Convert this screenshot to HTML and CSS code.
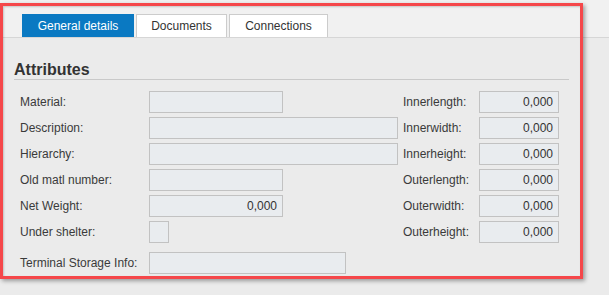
FILE: index.html
```html
<!DOCTYPE html>
<html lang="en">
<head>
  <meta charset="UTF-8">
  <meta name="viewport" content="width=device-width, initial-scale=1.0">
  <title>Material - General details</title>
  <link rel="stylesheet" href="styles.css">
</head>
<body>
  <div class="screen">
    <div class="tabbar">
      <button class="tab tab-general active">General details</button>
      <button class="tab tab-docs">Documents</button>
      <button class="tab tab-conn">Connections</button>
    </div>

    <section class="panel">
      <h2 class="section-title">Attributes</h2>

      <div class="form-grid">
        <label class="lbl">Material:</label>
        <div class="field w-short"></div>
        <label class="lbl">Innerlength:</label>
        <div class="field num">0,000</div>

        <label class="lbl">Description:</label>
        <div class="field w-long"></div>
        <label class="lbl">Innerwidth:</label>
        <div class="field num">0,000</div>

        <label class="lbl">Hierarchy:</label>
        <div class="field w-long"></div>
        <label class="lbl">Innerheight:</label>
        <div class="field num">0,000</div>

        <label class="lbl">Old matl number:</label>
        <div class="field w-short"></div>
        <label class="lbl">Outerlength:</label>
        <div class="field num">0,000</div>

        <label class="lbl">Net Weight:</label>
        <div class="field w-short num">0,000</div>
        <label class="lbl">Outerwidth:</label>
        <div class="field num">0,000</div>

        <label class="lbl">Under shelter:</label>
        <div class="field check"></div>
        <label class="lbl">Outerheight:</label>
        <div class="field num">0,000</div>
      </div>

      <div class="form-row">
        <label class="lbl">Terminal Storage Info:</label>
        <div class="field w-mid"></div>
      </div>
    </section>

    <div class="highlight"></div>
  </div>
</body>
</html>
```

FILE: styles.css
```css
body { margin: 0; background: #ebebeb; font-family: "Liberation Sans", Arial, sans-serif; color: #333; }
.screen { position: relative; width: 609px; height: 295px; overflow: hidden; }

.tabbar { display: flex; gap: 2px; height: 38px; box-sizing: border-box; padding: 14px 0 0 22px; background: #f1f1f1; border-bottom: 1px solid #d6d6d6; }
.tab { flex: none; height: 23px; padding: 0; border: 1px solid #cccccc; border-bottom: none; background: #fff; color: #333; font-family: inherit; font-size: 12px; line-height: 21px; text-align: center; cursor: pointer; }
.tab.active { background: #0a79c2; border-color: #0a79c2; color: #fff; }
.tab-general { width: 112px; }
.tab-docs { width: 91px; }
.tab-conn { width: 99px; }

.panel { padding: 22px 0 0 0; }
.section-title { margin: 0 0 11px 14px; width: 555px; font-size: 16px; line-height: 19px; font-weight: bold; color: #333; border-bottom: 1px solid #c9c9c9; }

.form-grid { display: grid; grid-template-columns: 129px 254px 76px 80px; grid-auto-rows: 22px; row-gap: 4px; margin-left: 20px; align-items: center; }
.form-row { display: grid; grid-template-columns: 129px 197px; height: 22px; margin: 9px 0 0 20px; align-items: center; }

.lbl { font-size: 12px; color: #3a3a3a; white-space: nowrap; }

.field { height: 22px; box-sizing: border-box; background: #e9ecef; border: 1px solid #c2c2c2; font-size: 12px; line-height: 20px; color: #333; }
.field.num { text-align: right; padding-right: 5px; }
.w-short { width: 134px; }
.w-long { width: 249px; }
.w-mid { width: 197px; }
.check { width: 20px; }

/* annotation frame drawn over the screenshot */
.highlight { position: absolute; left: 0; top: 3px; width: 583px; height: 276px; box-sizing: border-box; border: 3px solid #f5474a; box-shadow: 2px 2px 4px rgba(0,0,0,0.35), inset 1px 1px 2px rgba(0,0,0,0.18); pointer-events: none; }
```
